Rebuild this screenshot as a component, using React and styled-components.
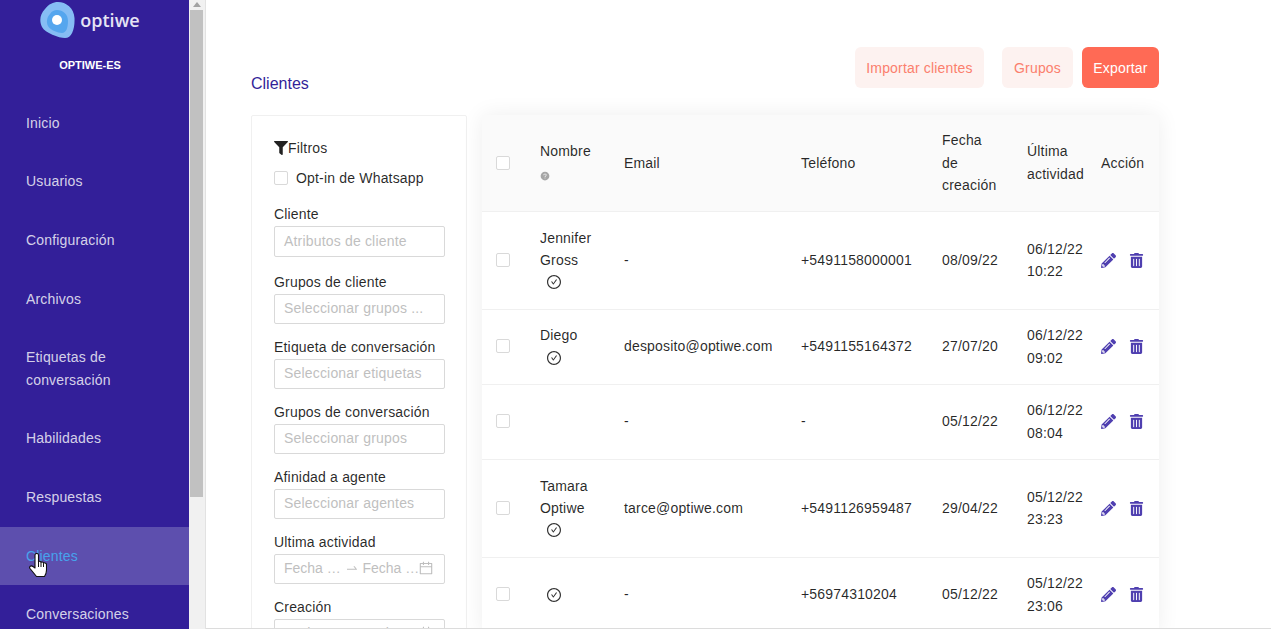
import React from "react";
import styled, { createGlobalStyle } from "styled-components";
import { FaFilter, FaPencilAlt, FaTrashAlt } from "react-icons/fa";
import {
  AiOutlineCheckCircle,
  AiFillQuestionCircle,
  AiOutlineCalendar,
  AiOutlineSwapRight,
} from "react-icons/ai";

const GlobalStyle = createGlobalStyle`
  html, body {
    margin: 0;
    height: 100%;
    overflow: hidden;
    background: #fff;
  }
  * {
    box-sizing: border-box;
  }
  body {
    font-family: "Liberation Sans", Arial, sans-serif;
    font-size: 14px;
    letter-spacing: 0.18px;
    color: rgba(0, 0, 0, 0.85);
  }
`;

const Page = styled.div`
  display: flex;
  width: 1271px;
  height: 629px;
  overflow: hidden;
  position: relative;
`;

const Sidebar = styled.aside`
  flex: 0 0 189px;
  height: 629px;
  background: #331f99;
  overflow: hidden;
`;

const Brand = styled.div`
  height: 93.8px;
  padding: 2px 9px 0 0;
  display: flex;
  flex-direction: column;
  align-items: center;
`;

const LogoRow = styled.div`
  display: flex;
  align-items: center;
  gap: 5px;
  height: 36px;
`;

const LogoText = styled.span`
  font-family: "Open Sans", sans-serif;
  font-size: 18px;
  font-weight: 600;
  letter-spacing: 0;
  color: #e6e4f4;
  line-height: 36px;
`;

const OrgName = styled.div`
  margin-top: 19px;
  font-size: 11px;
  font-weight: 700;
  letter-spacing: 0;
  line-height: 16px;
  color: #fff;
`;

const MenuItem = styled.div`
  padding: 18px 26px;
  line-height: 22.6px;
  font-size: 14px;
  color: ${(p) => (p.$active ? "#47a3ec" : "rgba(255, 255, 255, 0.8)")};
  background: ${(p) => (p.$active ? "#5d4fae" : "transparent")};
`;

const ScrollTrack = styled.div`
  flex: 0 0 17px;
  height: 629px;
  background: #f1f1f1;
  border-right: 1px solid #e2e2e2;
  padding: 0 2px 0 1px;
  display: flex;
  flex-direction: column;
  align-items: stretch;
`;

const ScrollArrow = styled.div`
  width: 0;
  height: 0;
  margin: 2px auto 3px;
  border-left: 4px solid transparent;
  border-right: 4px solid transparent;
  border-bottom: 5px solid #a3a3a3;
`;

const ScrollThumb = styled.div`
  height: 487px;
  background: #c1c1c1;
`;

const Main = styled.main`
  flex: 1;
  height: 629px;
  padding: 47px 0 0 45px;
  overflow: hidden;
  border-bottom: 1px solid #dcdcdc;
`;

const HeaderRow = styled.div`
  width: 908px;
  height: 68px;
  display: flex;
  align-items: flex-start;
`;

const Title = styled.h1`
  margin: 26px auto 0 0;
  font-size: 16px;
  font-weight: 400;
  letter-spacing: 0;
  line-height: 22px;
  color: #331f99;
`;

const ActionButton = styled.button`
  width: ${(p) => p.$width}px;
  height: 41px;
  padding: 0;
  margin-left: ${(p) => p.$gap}px;
  border: 0;
  border-radius: 6px;
  font: inherit;
  letter-spacing: inherit;
  background: ${(p) => (p.$primary ? "#ff6a55" : "#fdf2f0")};
  color: ${(p) => (p.$primary ? "#fff" : "#fb7f6d")};
`;

const Content = styled.div`
  display: flex;
  align-items: flex-start;
  gap: 15px;
  width: 908px;
`;

const FilterPanel = styled.section`
  flex: 0 0 216px;
  min-width: 0;
  height: 560px;
  padding: 21px 21px 0 22px;
  border: 1px solid #f0f0f0;
  border-radius: 2px;
`;

const FilterTitle = styled.div`
  display: flex;
  align-items: center;
  height: 22px;
  font-size: 14px;
  svg {
    font-size: 14px;
    color: #222;
  }
`;

const OptIn = styled.label`
  display: flex;
  align-items: center;
  gap: 8px;
  margin-top: 8px;
  height: 22px;
  margin-bottom: 14px;
`;

const Box = styled.span`
  display: block;
  flex: none;
  width: 14px;
  height: 14px;
  margin-bottom: ${(p) => (p.$lift ? 2 : 0)}px;
  background: #fff;
  border: 1px solid #d9d9d9;
  border-radius: 2px;
`;

const Field = styled.div`
  margin-bottom: ${(p) => (p.$first ? 14 : 12)}px;
`;

const FieldLabel = styled.div`
  line-height: 22px;
  height: 23px;
`;

const Input = styled.div`
  display: flex;
  align-items: center;
  height: ${(p) => (p.$tall ? 31 : 30)}px;
  padding: 0 10px 2px 9px;
  border: 1px solid #d9d9d9;
  border-radius: 2px;
  color: #bfbfbf;
  white-space: nowrap;
  overflow: hidden;
`;

const RangeSlot = styled.span`
  flex: 1;
  min-width: 0;
  letter-spacing: 0;
`;

const RangeIcon = styled.span`
  display: flex;
  flex: none;
  font-size: ${(p) => p.$size}px;
  margin: ${(p) => p.$margin};
  color: #bfbfbf;
`;

const TableCard = styled.div`
  flex: 0 0 677px;
  background: #fff;
  border-radius: 2px;
  box-shadow: 0 0 22px rgba(0, 0, 0, 0.07);
`;

const Table = styled.table`
  width: 677px;
  table-layout: fixed;
  border-collapse: collapse;
  line-height: 22.4px;
`;

const Th = styled.th`
  height: 96px;
  padding: 0 14px;
  font-weight: 400;
  text-align: left;
  background: #fafafa;
  border-bottom: 1px solid #f0f0f0;
  width: ${(p) => p.$w}px;
`;

const Td = styled.td`
  height: ${(p) => p.$h}px;
  padding: 0 0 0 14px;
  border-bottom: 1px solid #f0f0f0;
`;

const Hint = styled.div`
  display: flex;
  margin: 7px 0 2px;
  font-size: 10px;
  color: #a6a6a6;
  height: 14px;
  align-items: center;
`;

const Verified = styled.div`
  display: flex;
  height: 22px;
  align-items: center;
  padding-left: 6px;
  font-size: 16px;
  color: #333;
`;

const Actions = styled.div`
  display: flex;
  align-items: center;
  gap: 13px;
  font-size: 15px;
  color: #4f3fb0;
`;

const HandCursor = styled.svg`
  position: absolute;
  left: 29px;
  top: 553px;
`;

const menu = [
  "Inicio",
  "Usuarios",
  "Configuración",
  "Archivos",
  "Etiquetas de conversación",
  "Habilidades",
  "Respuestas",
  "Clientes",
  "Conversaciones",
];

const fields = [
  ["Cliente", "Atributos de cliente"],
  ["Grupos de cliente", "Seleccionar grupos ..."],
  ["Etiqueta de conversación", "Seleccionar etiquetas"],
  ["Grupos de conversación", "Seleccionar grupos"],
  ["Afinidad a agente", "Seleccionar agentes"],
];

const rows = [
  { h: 98, name: ["Jennifer", "Gross"], email: "-", phone: "+5491158000001", created: "08/09/22", last: ["06/12/22", "10:22"] },
  { h: 75, name: ["Diego"], email: "desposito@optiwe.com", phone: "+5491155164372", created: "27/07/20", last: ["06/12/22", "09:02"] },
  { h: 75, name: [], noCheck: true, email: "-", phone: "-", created: "05/12/22", last: ["06/12/22", "08:04"] },
  { h: 98, name: ["Tamara", "Optiwe"], email: "tarce@optiwe.com", phone: "+5491126959487", created: "29/04/22", last: ["05/12/22", "23:23"] },
  { h: 75, name: [], email: "-", phone: "+56974310204", created: "05/12/22", last: ["05/12/22", "23:06"] },
];

function Logo() {
  return (
    <svg width="35" height="36" viewBox="0 0 35 36">
      <path
        d="M18 0C26 0 34 6 34.5 16C35 26 32 36 25 36C19 36 5 31 2 25C-1 19 0 12 5 7C9 2 13 0 18 0Z"
        fill="#86bdf4"
      />
      <path
        d="M17 8C23 8 28 12 28 19C28 26 26 31 22 31C18 31 10 28 8 24C6 20 7 15 10 12C12 9 14 8 17 8Z"
        fill="#55a6ee"
      />
      <circle cx="17" cy="18" r="5" fill="#fff" />
    </svg>
  );
}

function Range() {
  return (
    <Input>
      <RangeSlot>Fecha …</RangeSlot>
      <RangeIcon $size={14} $margin="0 4px 0 5px">
        <AiOutlineSwapRight />
      </RangeIcon>
      <RangeSlot>Fecha …</RangeSlot>
      <RangeIcon $size={16} $margin="0">
        <AiOutlineCalendar />
      </RangeIcon>
    </Input>
  );
}

export default function App() {
  return (
    <Page>
      <GlobalStyle />
      <Sidebar>
        <Brand>
          <LogoRow>
            <Logo />
            <LogoText>optiwe</LogoText>
          </LogoRow>
          <OrgName>OPTIWE-ES</OrgName>
        </Brand>
        {menu.map((item) => (
          <MenuItem key={item} $active={item === "Clientes"}>
            {item}
          </MenuItem>
        ))}
      </Sidebar>
      <ScrollTrack>
        <ScrollArrow />
        <ScrollThumb />
      </ScrollTrack>
      <Main>
        <HeaderRow>
          <Title>Clientes</Title>
          <ActionButton $width={129}>Importar clientes</ActionButton>
          <ActionButton $width={71} $gap={18}>
            Grupos
          </ActionButton>
          <ActionButton $width={77} $gap={9} $primary>
            Exportar
          </ActionButton>
        </HeaderRow>
        <Content>
          <FilterPanel>
            <FilterTitle>
              <FaFilter />
              Filtros
            </FilterTitle>
            <OptIn>
              <Box />
              Opt-in de Whatsapp
            </OptIn>
            {fields.map(([label, hint], i) => (
              <Field key={label} $first={i === 0}>
                <FieldLabel>{label}</FieldLabel>
                <Input $tall={i === 0}>{hint}</Input>
              </Field>
            ))}
            <Field>
              <FieldLabel>Ultima actividad</FieldLabel>
              <Range />
            </Field>
            <Field>
              <FieldLabel>Creación</FieldLabel>
              <Range />
            </Field>
          </FilterPanel>
          <TableCard>
            <Table>
              <thead>
                <tr>
                  <Th $w={44}>
                    <Box />
                  </Th>
                  <Th $w={84}>
                    Nombre
                    <Hint>
                      <AiFillQuestionCircle />
                    </Hint>
                  </Th>
                  <Th $w={177}>Email</Th>
                  <Th $w={141}>Teléfono</Th>
                  <Th $w={85}>Fecha de creación</Th>
                  <Th $w={74}>Última actividad</Th>
                  <Th $w={72}>Acción</Th>
                </tr>
              </thead>
              <tbody>
                {rows.map((row, i) => (
                  <tr key={i}>
                    <Td $h={row.h}>
                      <Box $lift={row.h === 75} />
                    </Td>
                    <Td $h={row.h}>
                      {row.name.map((part) => (
                        <div key={part}>{part}</div>
                      ))}
                      {!row.noCheck && (
                        <Verified>
                          <AiOutlineCheckCircle />
                        </Verified>
                      )}
                    </Td>
                    <Td $h={row.h}>{row.email}</Td>
                    <Td $h={row.h}>{row.phone}</Td>
                    <Td $h={row.h}>{row.created}</Td>
                    <Td $h={row.h}>
                      {row.last.map((part) => (
                        <div key={part}>{part}</div>
                      ))}
                    </Td>
                    <Td $h={row.h}>
                      <Actions>
                        <FaPencilAlt />
                        <FaTrashAlt />
                      </Actions>
                    </Td>
                  </tr>
                ))}
              </tbody>
            </Table>
          </TableCard>
        </Content>
      </Main>
      <HandCursor width="18" height="24" viewBox="0 0 18 24">
        <path
          d="M6 2C6 0 9.5 0 9.5 2V9C9.5 8 12 8 12 9.5C12 8.7 14.5 8.7 14.5 10.2C14.5 9.5 17.5 9.7 17.5 11.5V17C17.5 20 16.5 22 15.5 23.5H7.5C5.5 21 3 18 1 15.5C-0.3 13.5 2 12 4 13.5L6 15Z"
          fill="#fff"
          stroke="#111"
          strokeWidth="1.1"
          strokeLinejoin="round"
        />
        <path d="M9.5 9V14M12 9.5V14M14.5 10.2V14" stroke="#111" strokeWidth="1" fill="none" />
      </HandCursor>
    </Page>
  );
}
